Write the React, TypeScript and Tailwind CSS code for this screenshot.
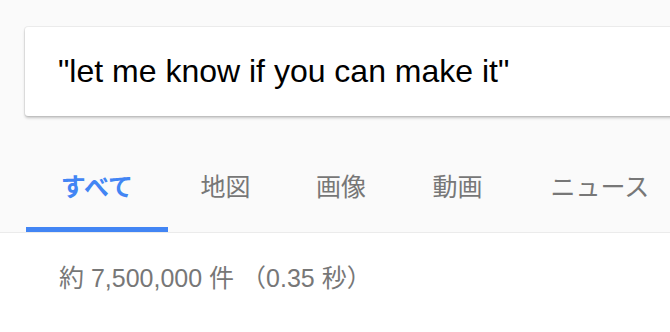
import React from 'react'

const tabs = [
  { label: 'すべて', w: 'w-[142px]' },
  { label: '地図', w: 'w-[115px]' },
  { label: '画像', w: 'w-[116px]' },
  { label: '動画', w: 'w-[117px]' },
  { label: 'ニュース', w: 'w-[168px]' },
]

export default function App() {
  const active = 0

  return (
    <div className="w-[670px] h-[332px] overflow-hidden bg-white" style={{ fontFamily: '"Liberation Sans", "Noto Sans CJK JP", sans-serif' }}>
      {/* ヘッダー: 検索ボックス + タブ */}
      <div className="bg-[#fafafa] border-b border-[#ebebeb] pt-[27px]">
        <div className="ml-[25px] w-[720px] h-[89px] bg-white rounded-[3px] shadow-[0_2px_3px_rgba(0,0,0,0.22),0_0_0_1px_rgba(0,0,0,0.05)] flex items-center pl-[33px]">
          <span className="text-[32px] leading-[37px] text-black whitespace-nowrap">"let me know if you can make it"</span>
        </div>

        <div className="flex ml-[26px] mt-[54px]">
          {tabs.map((t, i) => (
            <div
              key={t.label}
              className={`${t.w} shrink-0 text-center pb-[27px] border-b-[5px] ${
                i === active ? 'border-[#4285f4]' : 'border-transparent'
              }`}
            >
              <span
                className={`block h-[30px] leading-[30px] text-[25px] whitespace-nowrap ${
                  i === active ? 'text-[#4285f4] font-bold' : 'text-[#777777]'
                }`}
                style={{ fontFamily: '"Noto Sans CJK JP", sans-serif' }}
              >
                {t.label}
              </span>
            </div>
          ))}
        </div>
      </div>

      {/* 検索結果の件数 */}
      <div className="pl-[59px] pt-[31px] text-[25px] leading-[28px] text-[#777777] whitespace-nowrap">
        約 7,500,000 件 （0.35 秒）
      </div>
    </div>
  )
}
